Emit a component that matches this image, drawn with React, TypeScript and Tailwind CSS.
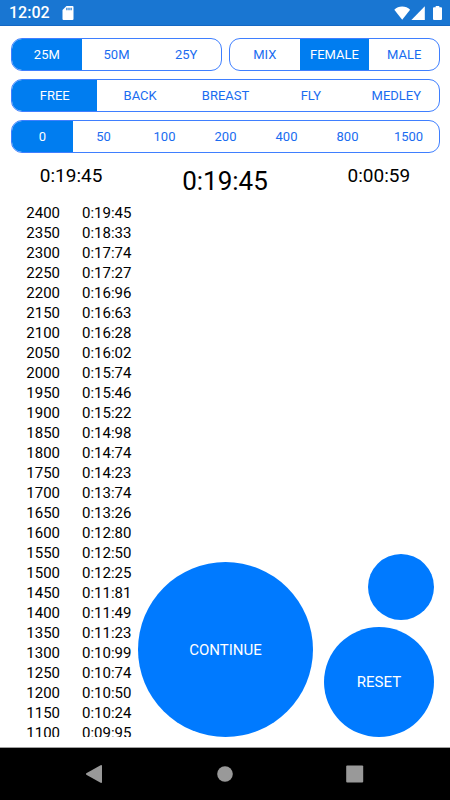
import { useState } from 'react';

const laps = [
  ['2400', '0:19:45'],
  ['2350', '0:18:33'],
  ['2300', '0:17:74'],
  ['2250', '0:17:27'],
  ['2200', '0:16:96'],
  ['2150', '0:16:63'],
  ['2100', '0:16:28'],
  ['2050', '0:16:02'],
  ['2000', '0:15:74'],
  ['1950', '0:15:46'],
  ['1900', '0:15:22'],
  ['1850', '0:14:98'],
  ['1800', '0:14:74'],
  ['1750', '0:14:23'],
  ['1700', '0:13:74'],
  ['1650', '0:13:26'],
  ['1600', '0:12:80'],
  ['1550', '0:12:50'],
  ['1500', '0:12:25'],
  ['1450', '0:11:81'],
  ['1400', '0:11:49'],
  ['1350', '0:11:23'],
  ['1300', '0:10:99'],
  ['1250', '0:10:74'],
  ['1200', '0:10:50'],
  ['1150', '0:10:24'],
  ['1100', '0:09:95'],
];

function Segmented({ label, options, initial }: { label: string; options: string[]; initial: string }) {
  const [selected, setSelected] = useState(initial);

  return (
    <div
      role="group"
      aria-label={label}
      className="flex h-[33px] flex-1 overflow-hidden rounded-[11px] border border-[#3f7fff]"
    >
      {options.map((option) => (
        <button
          key={option}
          type="button"
          aria-pressed={selected === option}
          onClick={() => setSelected(option)}
          className={`flex-1 basis-0 text-[13px] leading-5 ${
            selected === option ? 'bg-[#007df0] text-white' : 'text-[#1a6cf0]'
          }`}
        >
          {option}
        </button>
      ))}
    </div>
  );
}

function StatusBar() {
  return (
    <header className="flex h-[26px] shrink-0 items-center border-b border-[#1468c4] bg-[#1976d2] pr-2 pl-[9px] text-white">
      <span className="text-base leading-5 font-medium">12:02</span>
      {/* SD card */}
      <svg className="ml-3 h-[14px] w-[12px]" viewBox="0 0 12 14" fill="currentColor">
        <path
          fillRule="evenodd"
          d="M4.5 0H10.5Q11.5 0 11.5 1V13Q11.5 14 10.5 14H1.5Q.5 14 .5 13V4ZM4.3 1.8V4.3H5.5V1.8ZM6.4 1.8V4.3H7.6V1.8ZM8.5 1.8V4.3H9.7V1.8Z"
        />
      </svg>
      <div className="ml-auto flex items-center">
        <svg className="h-[14px] w-[17px]" viewBox="0 0 17 14" fill="currentColor">
          <path d="M8.2 13.7 .3 3.7Q3.6.5 8.2.5T16.1 3.7Z" />
        </svg>
        <svg className="h-[14px] w-[14px]" viewBox="0 0 14 14" fill="currentColor">
          <path d="M13.8.3V14H.4Z" />
        </svg>
        <svg className="ml-2 h-[14px] w-[9px]" viewBox="0 0 9 14" fill="currentColor">
          <path d="M2.7 0H6.3V1.3H8Q9 1.3 9 2.3V13Q9 14 8 14H1Q0 14 0 13V2.3Q0 1.3 1 1.3H2.7Z" />
        </svg>
      </div>
    </header>
  );
}

function NavBar() {
  return (
    <nav className="flex h-[53px] shrink-0 items-center border-t border-[#a0a0a0] bg-black px-[30px] text-[#999999]">
      <button type="button" aria-label="Back" className="flex flex-1 justify-center">
        <svg className="h-[18px] w-[18px]" viewBox="0 0 18 18" fill="currentColor">
          <path d="M.3 8.3 14.6.2Q16 -.2 16 1V17Q16 18.2 14.6 17.8L.3 9.7Q-.3 9 .3 8.3Z" />
        </svg>
      </button>
      <button type="button" aria-label="Home" className="flex flex-1 justify-center">
        <svg className="h-[18px] w-[18px]" viewBox="0 0 18 18" fill="currentColor">
          <circle cx="9" cy="9" r="7.8" />
        </svg>
      </button>
      <button type="button" aria-label="Overview" className="flex flex-1 justify-center">
        <svg className="h-[18px] w-[18px]" viewBox="0 0 18 18" fill="currentColor">
          <rect x=".2" y=".5" width="17" height="17" rx="1" />
        </svg>
      </button>
    </nav>
  );
}

export default function App() {
  return (
    <div className="flex h-screen flex-col bg-white font-[Roboto,sans-serif] text-black">
      <StatusBar />

      <main className="flex min-h-0 flex-1 flex-col pt-3 pb-[10px]">
        {/* Event selection */}
        <div className="flex flex-col gap-2 pr-[10px] pl-[11px]">
          <div className="flex gap-[7px]">
            <Segmented label="Pool" options={['25M', '50M', '25Y']} initial="25M" />
            <Segmented label="Gender" options={['MIX', 'FEMALE', 'MALE']} initial="FEMALE" />
          </div>
          <div className="flex">
            <Segmented label="Stroke" options={['FREE', 'BACK', 'BREAST', 'FLY', 'MEDLEY']} initial="FREE" />
          </div>
          <div className="flex">
            <Segmented label="Distance" options={['0', '50', '100', '200', '400', '800', '1500']} initial="0" />
          </div>
        </div>

        {/* Timers */}
        <div className="mt-2 flex items-start justify-around">
          <span className="text-[19px] leading-[30px]">0:19:45</span>
          <span className="text-[26px] leading-[40px]">0:19:45</span>
          <span className="text-[19px] leading-[30px]">0:00:59</span>
        </div>

        <div className="mt-0.5 flex min-h-0 flex-1 px-4">
          <div className="w-[122px] shrink-0 overflow-y-auto [scrollbar-width:none]">
            <table aria-label="Lap times" className="text-[15px] leading-5">
              <tbody>
                {laps.map(([distance, time]) => (
                  <tr key={distance}>
                    <td className="w-11 p-0 text-right">{distance}</td>
                    <td className="p-0 pl-[22px]">{time}</td>
                  </tr>
                ))}
              </tbody>
            </table>
          </div>

          <button
            type="button"
            className="size-[175px] shrink-0 self-end rounded-full bg-[#007aff] text-[15px] leading-5 text-white"
          >
            CONTINUE
          </button>

          <div className="ml-auto flex flex-col items-end justify-end gap-[7px]">
            <button type="button" aria-label="Lap" className="size-[66px] rounded-full bg-[#007aff]" />
            <button
              type="button"
              className="size-[110px] rounded-full bg-[#007aff] text-[15px] leading-5 text-white"
            >
              RESET
            </button>
          </div>
        </div>
      </main>

      <NavBar />
    </div>
  );
}
